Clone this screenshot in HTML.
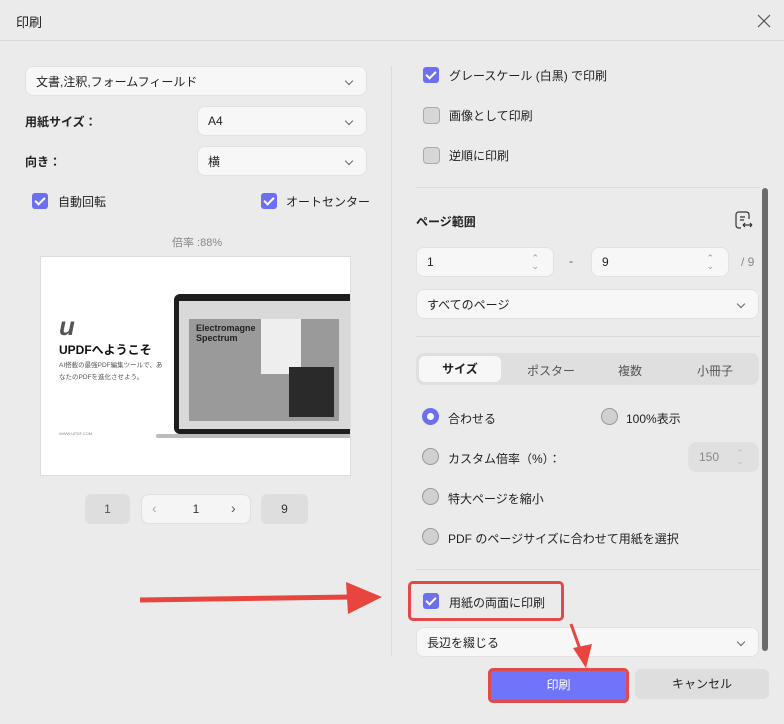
<!DOCTYPE html>
<html><head><meta charset="utf-8"><style>
*{box-sizing:border-box;margin:0;padding:0}
body{width:784px;height:724px;background:#ebebeb;font-family:"Liberation Sans","Noto Sans CJK JP",sans-serif;color:#222;font-size:12px;position:relative;overflow:hidden}
.a{position:absolute}
.sel{position:absolute;background:#f7f7f7;border-radius:8px;border:1px solid #e2e2e2;padding-left:10px;display:flex;align-items:center;font-size:12px}
.sel::after{content:"";position:absolute;right:14px;top:11px;width:5px;height:5px;border-right:1.2px solid #666;border-bottom:1.2px solid #666;transform:rotate(45deg)}
.cb{position:absolute;width:16px;height:16px;border-radius:3px;background:#6c70ef}
.cb::after{content:"";position:absolute;left:5px;top:2px;width:4px;height:8px;border-right:2px solid #fff;border-bottom:2px solid #fff;transform:rotate(45deg)}
.cbo{position:absolute;width:17px;height:17px;border-radius:4px;background:#d6d6d6;border:1px solid #aaa}
.rd{position:absolute;width:17px;height:17px;border-radius:50%;background:#d0d0d0;border:1px solid #999}
.rdon{position:absolute;width:17px;height:17px;border-radius:50%;background:#fff;border:5px solid #6c70ef}
.t{position:absolute;font-size:12px;white-space:nowrap}
.hr{position:absolute;height:1px;background:#dcdcdc}
.spin{position:absolute;background:#f7f7f7;border-radius:8px;border:1px solid #e2e2e2;padding-left:10px;display:flex;align-items:center}
.spin i{position:absolute;right:14px;font-style:normal;color:#999;font-size:9px;line-height:8px;text-align:center}
</style></head><body>
<div class="t" style="left:16px;top:12px;font-size:13px">印刷</div>
<svg class="a" style="left:757px;top:14px" width="14" height="14"><path d="M1 1L13 13M13 1L1 13" stroke="#555" stroke-width="1.2"/></svg>
<div class="hr" style="left:0;top:40px;width:784px;background:#dadada"></div>

<div class="sel" style="left:25px;top:66px;width:342px;height:30px">文書,注釈,フォームフィールド</div>
<div class="t" style="left:25px;top:113px;font-weight:bold">用紙サイズ：</div>
<div class="sel" style="left:197px;top:106px;width:170px;height:30px">A4</div>
<div class="t" style="left:25px;top:153px;font-weight:bold">向き：</div>
<div class="sel" style="left:197px;top:146px;width:170px;height:30px">横</div>
<div class="cb" style="left:32px;top:193px"></div><div class="t" style="left:58px;top:193px">自動回転</div>
<div class="cb" style="left:261px;top:193px"></div><div class="t" style="left:286px;top:193px">オートセンター</div>
<div class="t" style="left:172px;top:234px;color:#888;font-size:11px">倍率 :88%</div>

<div class="a" style="left:40px;top:256px;width:311px;height:220px;background:#fff;border:1px solid #ddd;overflow:hidden">
 <div class="a" style="left:18px;top:54px;font-size:26px;font-weight:bold;color:#555;font-style:italic">u</div>
 <div class="a" style="left:18px;top:84px;font-size:12px;font-weight:bold;color:#111">UPDFへようこそ</div>
 <div class="a" style="left:18px;top:103px;font-size:6.5px;color:#555;line-height:12px">AI搭載の最強PDF編集ツールで、あ<br>なたのPDFを進化させよう。</div>
 <div class="a" style="left:18px;top:174px;font-size:4px;color:#888">WWW.UPDF.COM</div>
 <div class="a" style="left:133px;top:37px;width:190px;height:140px;background:#1e1e1e;border-radius:6px"></div>
 <div class="a" style="left:138px;top:44px;width:180px;height:128px;background:#d9d9d9"></div>
 <div class="a" style="left:148px;top:62px;width:150px;height:102px;background:#9a9a9a"></div>
 <div class="a" style="left:155px;top:66px;font-size:9px;font-weight:bold;color:#222;line-height:10px">Electromagne<br>Spectrum</div>
 <div class="a" style="left:220px;top:62px;width:40px;height:55px;background:#eee"></div>
 <div class="a" style="left:248px;top:110px;width:45px;height:50px;background:#2a2a2a"></div>
 <div class="a" style="left:115px;top:177px;width:210px;height:4px;background:#bbb;border-radius:2px"></div>
</div>

<div class="a" style="left:85px;top:494px;width:45px;height:30px;background:#dedede;border-radius:6px;text-align:center;line-height:30px;color:#555">1</div>
<div class="a" style="left:141px;top:494px;width:110px;height:30px;background:#f5f5f5;border:1px solid #e0e0e0;border-radius:8px;text-align:center;line-height:28px;color:#333">1</div>
<div class="t" style="left:152px;top:500px;color:#aaa;font-size:14px">&lsaquo;</div>
<div class="t" style="left:231px;top:500px;color:#555;font-size:14px">&rsaquo;</div>
<div class="a" style="left:261px;top:494px;width:47px;height:30px;background:#dedede;border-radius:6px;text-align:center;line-height:30px;color:#333">9</div>

<div class="a" style="left:391px;top:66px;width:1px;height:590px;background:#dcdcdc"></div>

<div class="cb" style="left:423px;top:67px"></div><div class="t" style="left:449px;top:67px">グレースケール (白黒) で印刷</div>
<div class="cbo" style="left:423px;top:107px"></div><div class="t" style="left:449px;top:107px">画像として印刷</div>
<div class="cbo" style="left:423px;top:147px"></div><div class="t" style="left:449px;top:147px">逆順に印刷</div>
<div class="hr" style="left:416px;top:187px;width:344px"></div>
<div class="a" style="left:762px;top:188px;width:6px;height:463px;background:#6b6b6b;border-radius:3px"></div>

<div class="t" style="left:416px;top:213px;font-weight:bold">ページ範囲</div>
<svg class="a" style="left:735px;top:211px" width="18" height="20"><path d="M11 1H4Q1 1 1 4V14Q1 17 4 17H6M11 1Q14 1 14 4V8M5 6H10M5 9H9M8 14H17M8 14L10 12M8 14L10 16M17 14L15 12M17 14L15 16" fill="none" stroke="#333" stroke-width="1.2"/></svg>
<div class="spin" style="left:416px;top:247px;width:138px;height:30px">1<i style="top:6px">&#8963;<br>&#8964;</i></div>
<div class="t" style="left:569px;top:254px;color:#555">-</div>
<div class="spin" style="left:591px;top:247px;width:138px;height:30px">9<i style="top:6px">&#8963;<br>&#8964;</i></div>
<div class="t" style="left:741px;top:255px;color:#888">/ 9</div>
<div class="sel" style="left:416px;top:289px;width:343px;height:30px">すべてのページ</div>
<div class="hr" style="left:416px;top:336px;width:344px"></div>

<div class="a" style="left:416px;top:353px;width:343px;height:32px;background:#dfdfdf;border-radius:8px"></div>
<div class="a" style="left:419px;top:356px;width:82px;height:26px;background:#f7f7f7;border-radius:6px;text-align:center;line-height:26px;font-weight:bold">サイズ</div>
<div class="t" style="left:527px;top:362px;color:#555">ポスター</div>
<div class="t" style="left:618px;top:362px;color:#555">複数</div>
<div class="t" style="left:697px;top:362px;color:#555">小冊子</div>

<div class="rdon" style="left:422px;top:408px"></div><div class="t" style="left:448px;top:410px">合わせる</div>
<div class="rd" style="left:601px;top:408px"></div><div class="t" style="left:626px;top:410px">100%表示</div>
<div class="rd" style="left:422px;top:448px"></div><div class="t" style="left:448px;top:450px">カスタム倍率（%）：</div>
<div class="spin" style="left:688px;top:442px;width:71px;height:30px;background:#e0e0e0;color:#888">150<i style="top:6px;color:#bbb">&#8963;<br>&#8964;</i></div>
<div class="rd" style="left:422px;top:488px"></div><div class="t" style="left:448px;top:490px">特大ページを縮小</div>
<div class="rd" style="left:422px;top:528px"></div><div class="t" style="left:448px;top:530px">PDF のページサイズに合わせて用紙を選択</div>
<div class="hr" style="left:416px;top:569px;width:344px"></div>

<div class="a" style="left:408px;top:581px;width:156px;height:40px;border:3px solid #e04a4a;border-radius:5px"></div>
<div class="cb" style="left:423px;top:593px"></div><div class="t" style="left:449px;top:594px">用紙の両面に印刷</div>
<div class="sel" style="left:416px;top:627px;width:343px;height:30px">長辺を綴じる</div>

<div class="a" style="left:488px;top:668px;width:141px;height:35px;border:3px solid #e04a4a;border-radius:5px;background:#6f74f8;color:#fff;text-align:center;line-height:29px">印刷</div>
<div class="a" style="left:635px;top:669px;width:134px;height:30px;background:#dedede;border-radius:6px;text-align:center;line-height:30px">キャンセル</div>

<svg class="a" style="left:0;top:0" width="784" height="724">
<path d="M140 600L352 597" stroke="#e8453f" stroke-width="5"/>
<path d="M346 582L382 597L348 614Z" fill="#e8453f"/>
<path d="M571 624L581 652" stroke="#e8453f" stroke-width="3"/>
<path d="M573 648L586 668L592 644Z" fill="#e8453f"/>
</svg>
</body></html>
